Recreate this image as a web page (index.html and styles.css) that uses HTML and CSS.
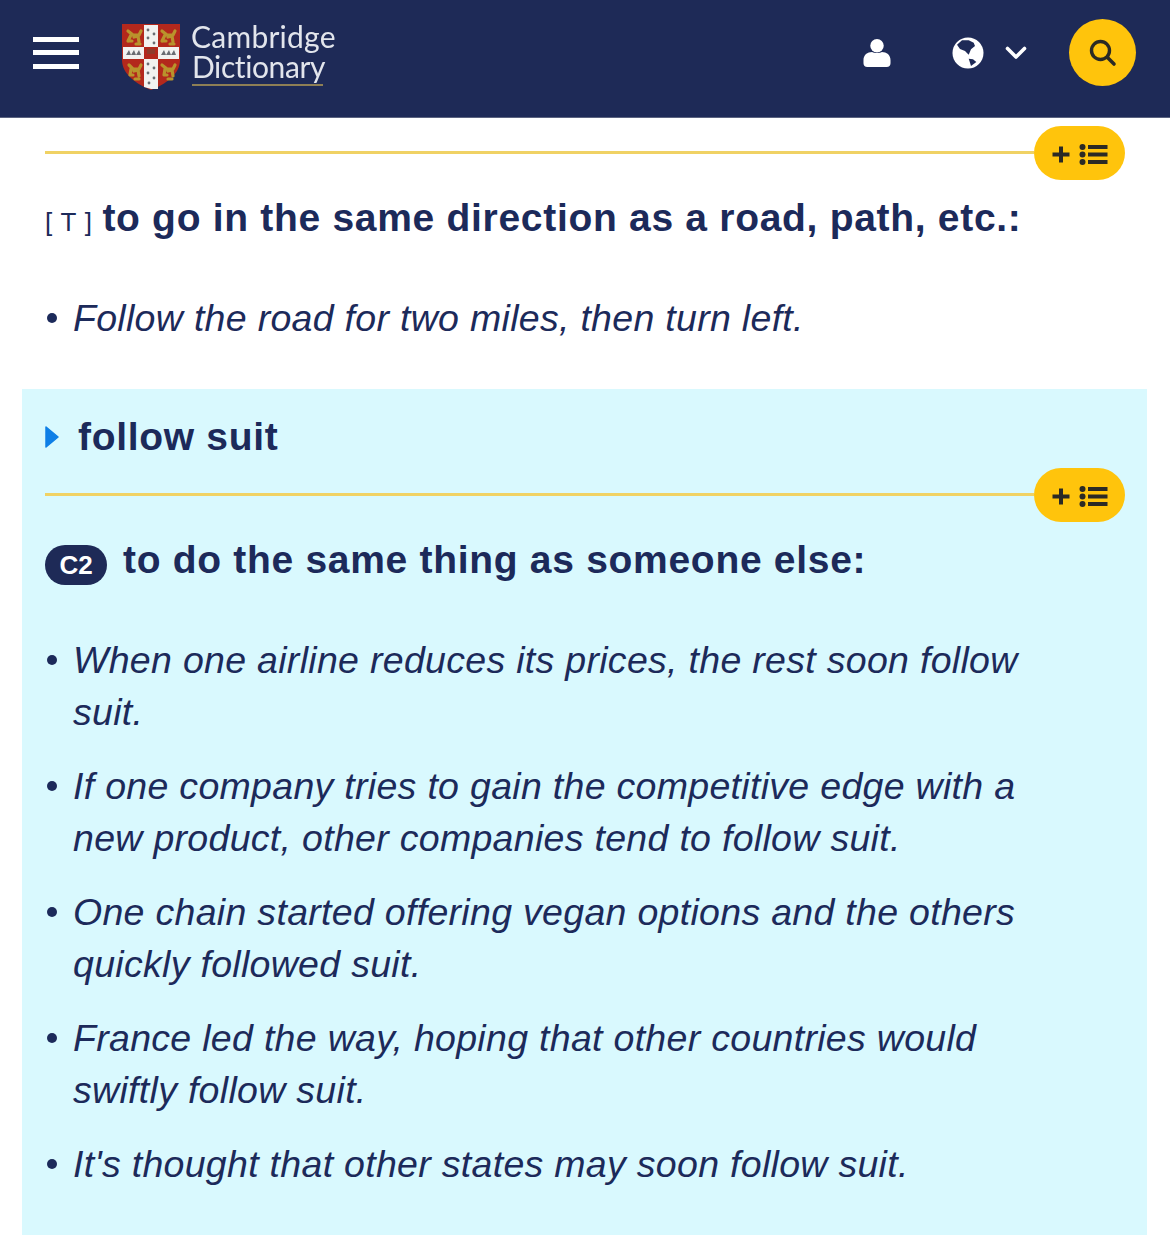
FILE: index.html
```html
<!DOCTYPE html>
<html lang="en">
<head>
<meta charset="utf-8">
<title>Cambridge Dictionary</title>
<link rel="stylesheet" href="styles.css">
</head>
<body>
<header class="topbar">
  <button class="burger" aria-label="Menu"><span></span><span></span><span></span></button>
  <div class="logo">
    <svg class="crest" width="58" height="66" viewBox="0 0 58 66">
      <path d="M0 0H58V36C58 50 44 60 29 66C14 60 0 50 0 36Z" fill="#b3281c"/>
      <path d="M22 1H36V23H57V35H36V65L29 65L22 63V35H1V23H22Z" fill="#f2f2f0"/>
      <rect x="22" y="23" width="14" height="12" fill="#b3281c"/>
      <rect x="25" y="25" width="8" height="5" fill="#8f3a2a"/>
      <g fill="none" stroke="#b9932c" stroke-width="3.200" stroke-linecap="round" stroke-linejoin="round">
        <path d="M6 7L11 11H17L19 7M9 11L6 17M12 13L16 12L17 18M6 17H10M14 20H18"/>
        <path d="M40 7L45 11H51L53 7M43 11L40 17M46 13L50 12L51 18M40 17H44M48 20H52"/>
        <path d="M7 41L11 45H17L19 41M9 45L8 51M12 47L16 46L17 52M8 51H11M13 55H17"/>
        <path d="M40 41L45 45H51L53 41M43 45L42 51M46 47L50 46L51 52M42 51H45M46 55H50"/>
      </g>
      <g fill="#6a6d72">
        <circle cx="26" cy="6" r="1.400"/><circle cx="32" cy="10" r="1.400"/><circle cx="26" cy="14" r="1.400"/><circle cx="32" cy="19" r="1.400"/>
        <circle cx="26" cy="40" r="1.400"/><circle cx="32" cy="44" r="1.400"/><circle cx="26" cy="49" r="1.400"/><circle cx="32" cy="54" r="1.400"/><circle cx="27" cy="59" r="1.400"/>
        <path d="M4 31L7 26L9 31L12 26L14 31L17 26L19 31Z"/>
        <path d="M39 31L42 26L44 31L47 26L49 31L52 26L54 31Z"/>
      </g>
    </svg>
    <div class="wordmark"><span class="wm-line">Cambridge</span><span class="wm-line wm-under">Dictionary</span></div>
  </div>
  <div class="tools">
    <svg class="user" width="28" height="28" viewBox="0 0 28 29"><circle cx="14" cy="7" r="7" fill="#fff"/><path d="M0 22C0 16.500 4 13.500 9 13.500C11 15 17 15 19 13.500C24 13.500 28 16.500 28 22V25C28 27.500 26.500 29 24 29H4C1.500 29 0 27.500 0 25Z" fill="#fff"/></svg>
    <svg class="globe" width="32" height="32" viewBox="0 0 32 32"><circle cx="16" cy="16" r="15.500" fill="#fff"/><path d="M5 7.700L10 3.300H16.700L21.700 5.700L23 9L19 12.300L16.700 17.700L13 14L8 12Z" fill="#1e2a57"/><path d="M16.700 21.700L21 22.300L24.300 25L19 29Z" fill="#1e2a57"/></svg>
    <svg class="chev" width="22" height="14" viewBox="0 0 22 14"><path d="M2.500 2.500L11 11L19.500 2.500" fill="none" stroke="#fff" stroke-width="3.600" stroke-linecap="round" stroke-linejoin="round"/></svg>
    <button class="search" aria-label="Search"><svg width="30" height="30" viewBox="0 0 30 30"><circle cx="12.500" cy="12.500" r="9" fill="none" stroke="#2b2a25" stroke-width="3.400"/><path d="M19.500 19.500L26 26" stroke="#2b2a25" stroke-width="3.600" stroke-linecap="round"/></svg></button>
  </div>
</header>

<main>
  <section class="sense">
    <div class="rule">
      <span class="pill"><svg width="56" height="23" viewBox="0 0 56 23"><path d="M7 3.500h4v6h6.500v4H11v6H7v-6H.500v-4H7z" fill="#2b2a25"/><circle cx="30.500" cy="4" r="3" fill="#2b2a25"/><circle cx="30.500" cy="11.500" r="3" fill="#2b2a25"/><circle cx="30.500" cy="19" r="3" fill="#2b2a25"/><rect x="36" y="2" width="19.500" height="4" fill="#2b2a25"/><rect x="36" y="9.500" width="19.500" height="4" fill="#2b2a25"/><rect x="36" y="17" width="19.500" height="4" fill="#2b2a25"/></svg></span>
    </div>
    <h2 class="def"><span class="gram">[ T ]</span> to go in the same direction as a road, path, etc.:</h2>
    <ul class="examples">
      <li>Follow the road for two miles, then turn left.</li>
    </ul>
  </section>

  <section class="idiom">
    <h3 class="idiom-title"><svg class="caret" width="14" height="24" viewBox="0 0 14 24"><path d="M1 2L13 12L1 22Z" fill="#0f7fe6" stroke="#0f7fe6" stroke-width="1.500" stroke-linejoin="round"/></svg>follow suit</h3>
    <div class="rule">
      <span class="pill"><svg width="56" height="23" viewBox="0 0 56 23"><path d="M7 3.500h4v6h6.500v4H11v6H7v-6H.500v-4H7z" fill="#2b2a25"/><circle cx="30.500" cy="4" r="3" fill="#2b2a25"/><circle cx="30.500" cy="11.500" r="3" fill="#2b2a25"/><circle cx="30.500" cy="19" r="3" fill="#2b2a25"/><rect x="36" y="2" width="19.500" height="4" fill="#2b2a25"/><rect x="36" y="9.500" width="19.500" height="4" fill="#2b2a25"/><rect x="36" y="17" width="19.500" height="4" fill="#2b2a25"/></svg></span>
    </div>
    <h2 class="def"><span class="level">C2</span>to do the same thing as someone else:</h2>
    <ul class="examples">
      <li>When one airline reduces its prices, the rest soon follow suit.</li>
      <li>If one company tries to gain the competitive edge with a new product, other companies tend to follow suit.</li>
      <li>One chain started offering vegan options and the others quickly followed suit.</li>
      <li>France led the way, hoping that other countries would swiftly follow suit.</li>
      <li>It's thought that other states may soon follow suit.</li>
    </ul>
  </section>
</main>
</body>
</html>
```
FILE: styles.css
```css
* { box-sizing: border-box; }
html, body { margin: 0; padding: 0; }
body {
  background: #fff;
  color: #1c2a5a;
  font-family: "Liberation Sans", Arial, sans-serif;
  width: 1170px;
  height: 1258px;
  overflow: hidden;
}
button { border: 0; padding: 0; background: none; }

.topbar {
  height: 118px;
  background: #1e2a57;
  border-bottom: 1px solid #5b6380;
  display: flex;
  align-items: center;
  padding: 0 34px 12px 33px;
}
.burger {
  display: flex;
  flex-direction: column;
  gap: 8.500px;
  width: 46px;
}
.burger span { display: block; height: 5px; background: #fff; }
.logo {
  display: flex;
  align-items: flex-start;
  margin-left: 43px;
  margin-top: 8px;
  filter: blur(0.5px);
}
.crest { display: block; }
.wordmark {
  display: flex;
  flex-direction: column;
  margin-left: 11px;
  margin-top: -3px;
  color: #e2e5ec;
  font-family: Lato, sans-serif;
  font-size: 30px;
  letter-spacing: 0.25px;
}
.wm-line {
  display: block;
  height: 30px;
  line-height: 30px;
  white-space: nowrap;
}
.wm-under {
  height: 35px;
  width: 131px;
  margin-left: 1px;
  letter-spacing: -0.4px;
  border-bottom: 2px solid #8e7f55;
}
.tools {
  margin-left: auto;
  display: flex;
  align-items: center;
}
.user { display: block; margin-top: 1px; }
.globe { display: block; margin-left: 61px; }
.chev { display: block; margin-left: 21px; margin-top: 1px; }
.search {
  margin-left: 42px;
  width: 67px;
  height: 67px;
  border-radius: 50%;
  background: #ffc40c;
  display: flex;
  align-items: center;
  justify-content: center;
}

.sense { padding: 8px 45px 0; }
.rule {
  display: flex;
  align-items: center;
  justify-content: flex-end;
  height: 54px;
}
.rule::before {
  content: "";
  flex: 1;
  height: 3px;
  background: #f0d264;
  margin-top: -2px;
}
.pill {
  width: 91px;
  height: 54px;
  padding-top: 2px;
  border-radius: 27px;
  background: #ffc40c;
  display: flex;
  align-items: center;
  justify-content: center;
  flex: none;
}
.def {
  margin: 14px 0 0;
  font-size: 39px;
  line-height: 48px;
  font-weight: 700;
  letter-spacing: 0.7px;
}
.gram {
  font-weight: 400;
  font-size: 26px;
  letter-spacing: 0.8px;
  margin-right: -2px;
}
.level {
  display: inline-block;
  width: 62px;
  height: 40px;
  line-height: 40px;
  border-radius: 20px;
  background: #1e2a57;
  color: #fff;
  font-size: 26px;
  letter-spacing: 0;
  text-align: center;
  vertical-align: -1px;
  margin-right: 16px;
}
.examples {
  list-style: none;
  margin: 46px 0 0;
  padding: 0 75px 0 28px;
}
.idiom .examples { margin-top: 49px; }
.examples li {
  position: relative;
  font-style: italic;
  font-size: 37.500px;
  line-height: 52px;
  letter-spacing: 0.3px;
  margin-bottom: 22px;
}
.examples li::before {
  content: "";
  position: absolute;
  left: -26px;
  top: 21px;
  width: 10px;
  height: 10px;
  border-radius: 50%;
  background: #1c2a5a;
}
.idiom {
  margin: 45px 23px 0 22px;
  padding: 23px 22px 0 23px;
  height: 846px;
  background: #d9f9fe;
}
.idiom-title {
  margin: 0;
  display: flex;
  align-items: center;
  font-size: 39px;
  line-height: 50px;
  font-weight: 700;
  letter-spacing: 0.7px;
}
.caret { margin-right: 19px; }
.idiom .rule { margin-top: 6px; }
```
